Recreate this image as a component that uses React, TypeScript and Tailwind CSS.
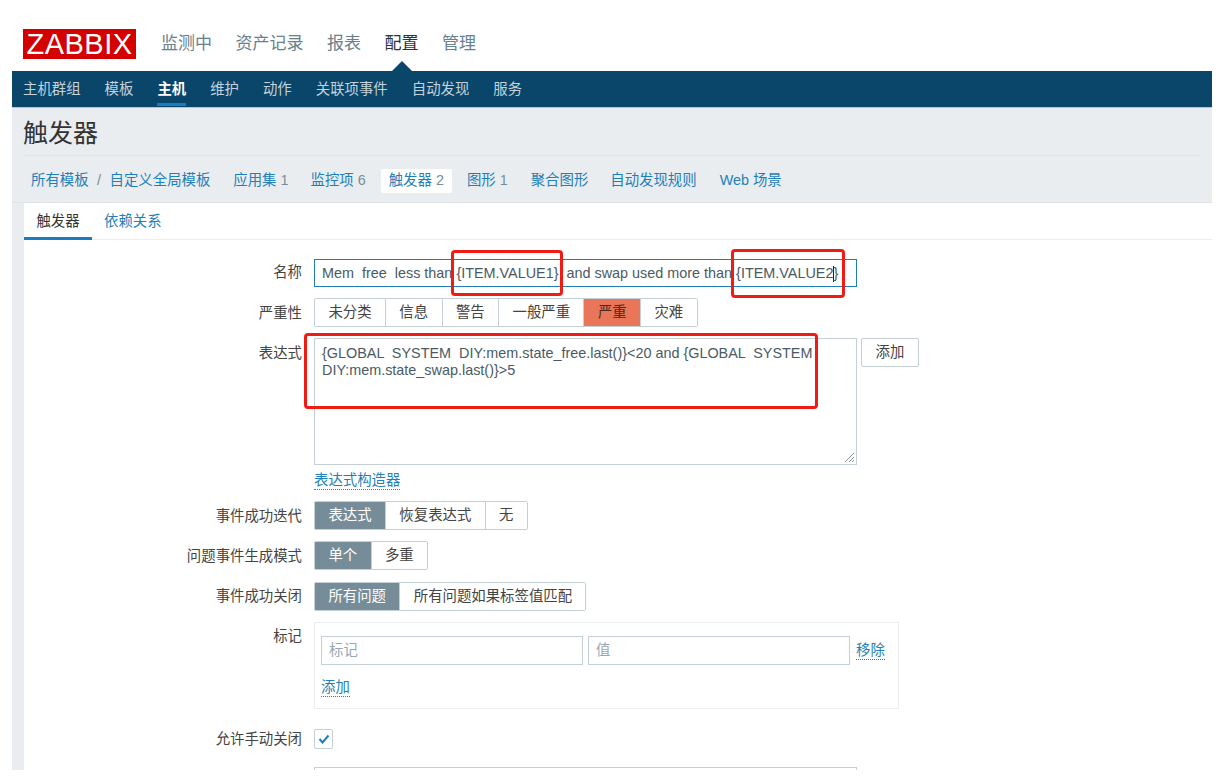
const mainNav = ["监测中", "资产记录", "报表", "配置", "管理"];
const subNav = ["主机群组", "模板", "主机", "维护", "动作", "关联项事件", "自动发现", "服务"];

function Segmented({ items, active, danger }: { items: string[]; active: string; danger?: boolean }) {
  return (
    <div className="flex h-[29px] rounded-[2px] border border-[#c5cfd6] text-[14.4px] bg-white text-[#444]">
      {items.map((item, i) => {
        const on = item === active;
        const cls = on
          ? danger
            ? "bg-[#e97659] text-[#4a2a20]"
            : "bg-[#768d99] text-white"
          : "bg-white";
        return (
          <div key={item} className={`flex items-center px-[13.4px] pt-[1px] ${i > 0 ? "border-l border-[#c5cfd6]" : ""} ${cls}`}>
            {item}
          </div>
        );
      })}
    </div>
  );
}

function Row({ label, children, className, labelPad }: { label: string; children: React.ReactNode; className?: string; labelPad?: string }) {
  return (
    <div className={`flex ${className ?? ""}`}>
      <div className={`h-[20px] w-[290px] pr-[12px] text-right text-[14.4px] leading-[20px] text-[#444] ${labelPad ?? "pt-[5px]"}`}>{label}</div>
      <div className="flex-1">{children}</div>
    </div>
  );
}

function RedBox({ className }: { className: string }) {
  return <div className={`absolute rounded-[4px] border-[3px] border-[#f01c14] ${className}`} />;
}

export default function App() {
  return (
    <div className="h-[778px] w-[1231px] overflow-hidden bg-white pl-[12px] pr-[19px] pb-[8px] font-['Liberation_Sans','Noto_Sans_CJK_SC',sans-serif]">
      <div className="h-[770px] overflow-hidden bg-[#e9edf0]">
        <header className="flex h-[71px] items-start bg-white pl-[11px] pt-[29px]">
          <div className="flex h-[30px] w-[113px] items-center justify-center bg-[#d40000] text-[29px] leading-none tracking-[0.5px] text-white">
            ZABBIX
          </div>
          <nav className="ml-[25px] mt-[1px] flex gap-[23.5px] text-[17px] leading-[28px] text-[#69808d]">
            {mainNav.map((n) => (
              <span key={n} className={n === "配置" ? "relative text-[#333]" : ""}>
                {n}
                {n === "配置" && (
                  <span className="absolute left-1/2 top-[31px] -ml-[10px] h-0 w-0 border-x-[10px] border-b-[10px] border-x-transparent border-b-[#0a466a]" />
                )}
              </span>
            ))}
          </nav>
        </header>
        <div className="flex h-[37px] gap-[24px] border-b border-[#b8c6cf] bg-[#0a466a] pl-[11px] text-[14.4px] leading-[37px] text-[#c4d2db]">
          {subNav.map((n) => (
            <span key={n} className={n === "主机" ? "h-[35px] border-b-[3px] border-[#1a7cc0] font-bold text-white" : ""}>
              {n}
            </span>
          ))}
        </div>
        <div className="px-[11px] pt-[1px]">
          <div className="flex h-[47px] items-center border-b border-[#dde2e6] pt-[3px] text-[25px] text-[#333]">触发器</div>
        </div>
        <div className="flex h-[47px] items-center border-b border-[#dfe4e7] pl-[19px] pt-[3px] text-[14.4px] text-[#1f7fb8]">
          <span>所有模板</span>
          <span className="mx-[8.5px] text-[#768d99]">/</span>
          <span>自定义全局模板</span>
          <span className="ml-[23px]">应用集 <span className="text-[#768d99]">1</span></span>
          <span className="ml-[22px]">监控项 <span className="text-[#768d99]">6</span></span>
          <span className="ml-[15px] flex h-[24px] items-center rounded-[2px] bg-white px-[8px]">触发器<span className="ml-[4px] text-[#768d99]">2</span></span>
          <span className="ml-[15px]">图形 <span className="text-[#768d99]">1</span></span>
          <span className="ml-[23px]">聚合图形</span>
          <span className="ml-[22px]">自动发现规则</span>
          <span className="ml-[23px]">Web 场景</span>
        </div>
        <div className="ml-[12px] h-[600px] bg-white">
          <div className="flex h-[37px] border-b border-[#ebeef0] text-[14.4px] leading-[36px]">
            <span className="h-[37px] w-[68px] border-b-[3px] border-[#1a7cc0] text-center text-[#333]">触发器</span>
            <span className="ml-[12px] text-[#1f7fb8]">依赖关系</span>
          </div>
          <div className="relative pt-[19px]">
            <Row label="名称" labelPad="pt-[3px]">
              <div className="flex h-[28px] w-[543px] items-center whitespace-pre border border-[#1f7fb8] pl-[7px] pt-[1px] text-[14.4px] text-[#4a5a64]">
                Mem  free  less than {"{ITEM.VALUE1}"}  and swap used more than {"{ITEM.VALUE2"}
                <span className="-mr-[1px] inline-block h-[16px] w-[1px] bg-[#222]" />
                {"}"}
              </div>
            </Row>
            <Row label="严重性" className="mt-[11px]">
              <div className="flex">
                <Segmented items={["未分类", "信息", "警告", "一般严重", "严重", "灾难"]} active="严重" danger />
              </div>
            </Row>
            <Row label="表达式" className="mt-[11px]">
              <div className="flex items-start gap-[4px]">
                <div className="relative h-[127px] w-[543px] border border-[#c5cfd6] px-[7px] pt-[6px] text-[14.4px] leading-[17px] whitespace-pre-wrap text-[#4a5a64]">
                  {"{GLOBAL  SYSTEM  DIY:mem.state_free.last()}<20 and {GLOBAL  SYSTEM  DIY:mem.state_swap.last()}>5"}
                  <svg className="absolute bottom-[1px] right-[1px]" width="12" height="12" viewBox="0 0 12 12">
                    <path d="M11 2 2 11M11 6 6 11M11 9 9 11" stroke="#8a9aa4" strokeWidth="1" fill="none" />
                  </svg>
                </div>
                <div className="flex h-[29px] items-center rounded-[2px] border border-[#c5cfd6] px-[13.5px] pt-[1px] text-[14.4px] text-[#444]">添加</div>
              </div>
              <span className="mt-[7px] inline-block border-b border-dotted border-[#1f7fb8] text-[14.4px] leading-[17px] text-[#1f7fb8]">表达式构造器</span>
            </Row>
            <Row label="事件成功迭代" className="mt-[9px]">
              <div className="flex"><Segmented items={["表达式", "恢复表达式", "无"]} active="表达式" /></div>
            </Row>
            <Row label="问题事件生成模式" className="mt-[11px]">
              <div className="flex"><Segmented items={["单个", "多重"]} active="单个" /></div>
            </Row>
            <Row label="事件成功关闭" className="mt-[12px]" labelPad="pt-[4px]">
              <div className="flex"><Segmented items={["所有问题", "所有问题如果标签值匹配"]} active="所有问题" /></div>
            </Row>
            <Row label="标记" className="mt-[11px]" labelPad="pt-[4px]">
              <div className="h-[87px] w-[585px] border border-[#ebeef0] pl-[6px] pt-[13px] text-[14.4px]">
                <div className="flex items-center">
                  <div className="flex h-[29px] w-[262px] items-center border border-[#c5cfd6] pl-[7px] text-[#9aa7af]">标记</div>
                  <div className="ml-[5px] flex h-[29px] w-[262px] items-center border border-[#c5cfd6] pl-[7px] text-[#9aa7af]">值</div>
                  <span className="ml-[6px] mt-[1px] border-b border-dotted border-[#1f7fb8] leading-[17px] text-[#1f7fb8]">移除</span>
                </div>
                <span className="mt-[14px] inline-block border-b border-dotted border-[#1f7fb8] leading-[17px] text-[#1f7fb8]">添加</span>
              </div>
            </Row>
            <Row label="允许手动关闭" className="mt-[20px]" labelPad="pt-0">
              <div className="flex h-[20px] w-[19px] items-center justify-center rounded-[2px] border border-[#c5cfd6]">
                <svg width="12" height="10" viewBox="0 0 12 10">
                  <path d="M1.5 5 4.5 8.5 10.5 1.5" stroke="#1f7fb8" strokeWidth="2" fill="none" />
                </svg>
              </div>
            </Row>
            <Row label="" className="mt-[18px]">
              <div className="h-[60px] w-[543px] border border-[#c5cfd6]" />
            </Row>
            <RedBox className="left-[427px] top-[10px] h-[46px] w-[112px]" />
            <RedBox className="left-[707px] top-[9px] h-[49px] w-[114px]" />
            <RedBox className="left-[280px] top-[93px] h-[76px] w-[514px]" />
          </div>
        </div>
      </div>
    </div>
  );
}
